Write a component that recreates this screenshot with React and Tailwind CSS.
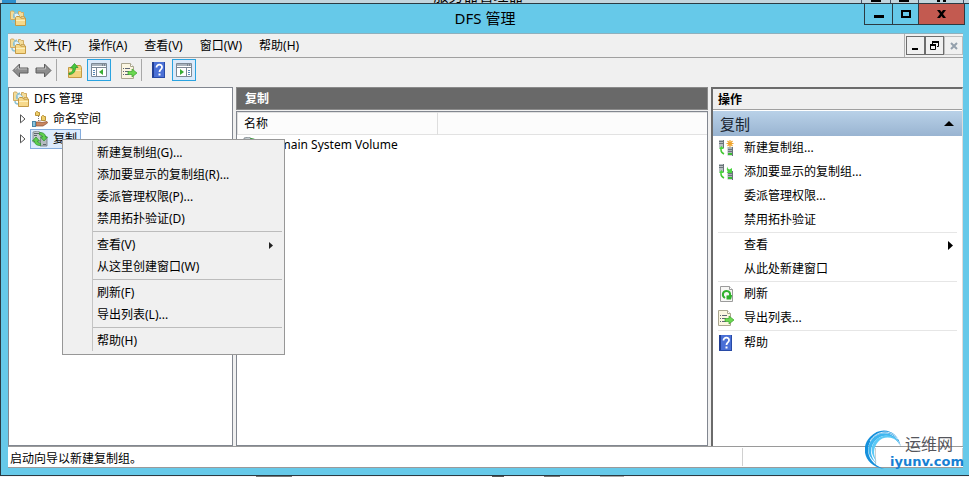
import React from "react";


const CONTEXT_MENU = [
    ["新建复制组(G)...", "添加要显示的复制组(R)...", "委派管理权限(P)...", "禁用拓扑验证(D)"],
    ["查看(V)", "从这里创建窗口(W)"],
    ["刷新(F)", "导出列表(L)..."],
    ["帮助(H)"],
];

const ACTIONS = [
    [
        { label: "新建复制组...", icon: <NewGroupIcon star /> },
        { label: "添加要显示的复制组...", icon: <NewGroupIcon /> },
        { label: "委派管理权限..." },
        { label: "禁用拓扑验证" },
    ],
    [{ label: "查看", submenu: true }, { label: "从此处新建窗口" }],
    [{ label: "刷新", icon: <RefreshIcon /> }, { label: "导出列表...", icon: <ExportIcon /> }],
    [{ label: "帮助", icon: <HelpIcon /> }],
];


export default function App() {
    return (
        <div className="relative flex min-h-screen flex-col overflow-hidden bg-white font-['Noto_Sans','Noto_Sans_CJK_SC',sans-serif] text-xs text-black">
            <BackWindow />
            <div className="flex flex-1 flex-col border-y border-l border-[#2b3a42] bg-[#66c9e9]">
                <TitleBar />
                <div className="ml-[7px] mr-[6px] mb-[7px] flex flex-1 flex-col border-t border-[#8fb0bd] bg-[#f0f0f0]">
                    <MenuBar />
                    <ToolBar />
                    <main className="grid flex-1 grid-cols-[225px_minmax(0,1fr)_252px] gap-[3px]">
                        <Tree />
                        <ReplicationList />
                        <ActionsPane />
                    </main>
                    <StatusBar />
                </div>
            </div>
            <div className="flex h-px gap-[40px] bg-[#f4f4f8] pl-[256px]">
                <span className="w-[36px] bg-[#777]" />
                <span className="w-[120px]" />
                <span className="w-[12px] bg-[#555]" />
                <span className="w-[16px] bg-[#777]" />
                <span className="w-[24px] bg-[#aaa]" />
            </div>
            <Watermark />
        </div>
    );
}


/* sliver of the server manager window behind this one */
function BackWindow() {
    return (
        <div className="relative flex h-[3px] justify-center overflow-hidden bg-[#c3d5dd]" aria-hidden="true">
            <div className="absolute left-[2px] top-0 h-[3px] w-[14px] bg-[#2d8fcc]" />
            <div className="absolute bottom-0 left-1/2 -ml-[51px] text-[15px] leading-4">服务器管理器</div>
            <div className="absolute right-[5px] top-0 flex h-[3px] w-[103px] border-x border-[#444f66]">
                <span className="flex flex-1 justify-center border-r border-[#444f66]"><i className="h-[2px] w-[10px] bg-black" /></span>
                <span className="flex flex-1 justify-center border-r border-[#444f66]"><i className="h-[2px] w-[10px] bg-black" /></span>
                <span className="flex w-[44px] justify-center gap-[3px]"><i className="h-[2px] w-[3px] bg-black" /><i className="h-[2px] w-[3px] bg-black" /></span>
            </div>
        </div>
    );
}


function TitleBar() {
    return (
        <header className="grid h-[29px] grid-cols-[1fr_auto_1fr] items-start pr-[4px]">
            <div className="pl-[9px] pt-[6px]"><FoldersIcon /></div>
            <h1 className="pl-[4px] text-[15px] leading-7">DFS 管理</h1>
            <div className="flex h-[21px] justify-self-end border border-t-0 border-[#2b3a42]">
                <button aria-label="最小化" className="flex w-[28px] items-center justify-center border-r border-[#2b3a42]">
                    <svg width="10" height="10"><path d="M0 6h10v3H0z" /></svg>
                </button>
                <button aria-label="最大化" className="flex w-[26px] items-center justify-center border-r border-[#2b3a42]">
                    <svg width="10" height="8"><path d="M0 0h10v8H0zM2 2v4h6V2z" fillRule="evenodd" /></svg>
                </button>
                <button aria-label="关闭" className="flex w-[45px] items-center justify-center bg-[#c35a50]">
                    <svg width="9" height="8"><path d="M0 0h3l1.500 2L6 0h3L6 4l3 4H6L4.500 6 3 8H0l3-4z" /></svg>
                </button>
            </div>
        </header>
    );
}


function MenuBar() {
    return (
        <div className="flex h-6 border-b border-[#a0a0a0]">
            <nav className="flex flex-1 items-center border-r border-[#b0b0b0] pl-[2px]">
                <FoldersIcon />
                <div className="flex gap-[17px] pl-[8px] leading-4">
                    <button>文件(F)</button>
                    <button>操作(A)</button>
                    <button>查看(V)</button>
                    <button>窗口(W)</button>
                    <button>帮助(H)</button>
                </div>
            </nav>
            <div className="flex items-center pl-px">
                <button aria-label="最小化子窗口" className="flex h-[19px] w-[19px] items-center justify-center border border-[#6d6d6d]">
                    <svg width="9" height="9"><path d="M1 7h6v2H1z" /></svg>
                </button>
                <button aria-label="还原子窗口" className="flex h-[19px] w-[19px] items-center justify-center border border-[#6d6d6d]">
                    <svg width="9" height="9" fill="none" stroke="#000"><path d="M.5 4v4.500h5V4M2.500 3V1.500h6v4H7" /><path d="M0 4h6M2 1h7" strokeWidth="2" /></svg>
                </button>
                <button aria-label="关闭子窗口" className="flex h-[19px] w-[19px] items-center justify-center border border-[#bdbdbd]">
                    <svg width="8" height="8" stroke="#94a0ac" strokeWidth="2"><path d="M1 1l6 6M7 1L1 7" /></svg>
                </button>
            </div>
        </div>
    );
}


function ToolBar() {
    return (
        <div className="flex h-[29px] items-start pl-[4px] pt-px">
            <button aria-label="后退" className="flex h-[22px] w-[23px] items-center"><ArrowIcon /></button>
            <button aria-label="前进" className="flex h-[22px] w-[21px] items-center"><ArrowIcon forward /></button>
            <Divider />
            <button aria-label="上一级" className="flex h-6 w-[30px] items-center justify-end pr-[4px]"><UpFolderIcon /></button>
            <button aria-label="显示/隐藏控制台树" className="flex h-[22px] w-6 items-center justify-center border border-[#2aa3e0] bg-[#dbeafa]"><PaneIcon /></button>
            <button aria-label="导出列表" className="flex h-6 w-[30px] items-center justify-end pr-[4px]"><ExportIcon /></button>
            <Divider />
            <button aria-label="帮助" className="flex h-[22px] w-[30px] items-center justify-center pl-[4px]"><HelpIcon /></button>
            <button aria-label="显示/隐藏操作窗格" className="flex h-[22px] w-6 items-center justify-center border border-[#2aa3e0] bg-[#dbeafa]"><PaneIcon right /></button>
        </div>
    );
}

function Divider() {
    return <div className="h-[22px] w-px bg-[#a8a8a8]" />;
}


function Tree() {
    return (
        <section className="border border-[#828790] bg-white pt-px leading-5">
            <div className="flex items-center gap-[5px] pl-[4px]">
                <FoldersIcon />
                <span>DFS 管理</span>
            </div>
            <ul>
                <li className="flex h-5 items-center pl-[11px]">
                    <Expander label="展开命名空间" />
                    <span className="flex items-center gap-[5px] pl-[6px]"><NamespaceIcon />命名空间</span>
                </li>
                <li className="relative flex h-5 items-center pl-[11px]">
                    <Expander label="展开复制" />
                    <span className="ml-[4px] flex h-5 items-center gap-[5px] border border-[#84acdd] bg-[#dcebfc] pl-px pr-[3px]"><ReplicationIcon />复制</span>
                    <ContextMenu />
                </li>
            </ul>
        </section>
    );
}

function Expander({ label }) {
    return (
        <button aria-label={label} className="flex w-[6px]">
            <svg width="6" height="10" fill="#fff" stroke="#555"><path d="M.5.800v8L5 5z" /></svg>
        </button>
    );
}


function ContextMenu() {
    return (
        <div role="menu" className="absolute left-[53px] top-[10px] z-10 w-[223px] border border-[#979797] bg-[#f0f0f0] pb-[3px] pl-[29px] pr-[2px] pt-px">
            <div className="border-l border-[#c4c4c4]">
                {CONTEXT_MENU.map((group, i) => (
                    <div key={i}>
                        {i > 0 && <div className="flex h-1 items-center"><div className="h-px flex-1 bg-[#bcbcbc]" /></div>}
                        {group.map((label) => (
                            <button key={label} role="menuitem" className="flex h-[22px] w-full items-center justify-between whitespace-nowrap pl-1 pr-[9px] pt-[2px] leading-5">
                                {label}
                                {label === "查看(V)" && <svg width="4" height="7"><path d="M0 0l4 3.500L0 7z" fill="#222" /></svg>}
                            </button>
                        ))}
                    </div>
                ))}
            </div>
        </div>
    );
}


function ReplicationList() {
    return (
        <section className="flex flex-col">
            <h2 className="h-[23px] border border-[#8a8a8a] bg-[#696969] pl-[8px] font-bold leading-[21px] text-white">复制</h2>
            <div className="mt-px flex-1 border border-[#828790] bg-white">
                <table className="w-full table-fixed border-collapse text-left">
                    <thead>
                        <tr className="h-[22px] border-y border-[#e2e2e2] bg-[#fcfcfc]">
                            <th className="w-[200px] border-x border-[#dedede] pl-[6px] font-normal leading-5">名称</th>
                            <th aria-label="空列" />
                        </tr>
                    </thead>
                    <tbody>
                        <tr>
                            <td colSpan={2} className="leading-5">
                                <span className="flex items-center gap-[5px] pl-[5px]"><ReplicationIcon />Domain System Volume</span>
                            </td>
                        </tr>
                    </tbody>
                </table>
            </div>
        </section>
    );
}


function ActionsPane() {
    return (
        <aside className="border-l-2 border-t-2 border-r border-[#6b6b6b] border-r-[#dcdcdc] bg-white">
            <h2 className="h-[21px] border-b border-[#a0a0a0] bg-[#f0f0f0] pl-[5px] pt-px font-bold leading-5">操作</h2>
            <div className="mt-px flex h-[25px] items-center justify-between bg-linear-to-b from-[#b9d1e8] to-[#99b4d1] pl-[7px] pr-[8px]">
                <h3 className="text-[15px] leading-6 text-[#1a2530]">复制</h3>
                <button aria-label="折叠">
                    <svg className="block" width="10" height="5"><path d="M5 0l5 5H0z" /></svg>
                </button>
            </div>
            {ACTIONS.map((group, i) => (
                <div key={i}>
                    {i > 0 && <div className="ml-[5px] mr-[5px] h-px bg-[#e6e6e6]" />}
                    {group.map((item) => (
                        <button key={item.label} className="flex h-6 w-full items-center pl-[5px] pr-[9px] text-left leading-6">
                            <span className="w-[26px]">{item.icon}</span>
                            <span className="flex-1">{item.label}</span>
                            {item.submenu && <svg width="5" height="9"><path d="M0 0l5 4.500L0 9z" /></svg>}
                        </button>
                    ))}
                </div>
            ))}
        </aside>
    );
}


function StatusBar() {
    return (
        <footer className="flex h-[22px] border-y border-[#9a9a9a] bg-white">
            <p className="flex-1 pl-[2px] pt-px leading-[22px]">启动向导以新建复制组。</p>
            <div className="my-px w-[133px] border-l border-[#d0d0d0]" />
            <div className="my-px w-[88px] border-x border-[#d0d0d0]" />
        </footer>
    );
}


function Watermark() {
    return (
        <div className="absolute bottom-[6px] right-[5px] flex h-[42px] w-[99px] flex-col items-end">
            <svg className="absolute left-0 top-0" width="40" height="42" fill="none">
                <path d="M36 19C33 3 17 0 8 9C-1 18 2 34 19 40C-1 37-5 18 5 8C16-4 34 1 36 19z" fill="#1590dc" />
                <path d="M35 17C30 5 17 4 10 12C3 20 6 31 14 36C2 29 0 18 8 9C17 0 32 4 35 17z" fill="#3fb6f0" />
                <path d="M34 14C28 7 18 7 13 13C8 19 8 26 12 33C5 25 5 17 11 11C18 4 29 5 34 14z" fill="#5cc9f5" />
                <path d="M5 12C12 1 26 0 33 10" stroke="#fff" strokeWidth=".8" />
            </svg>
            <div className="pr-[11px] pt-[5px] text-[16px] leading-[20px] text-[#55565c]">运维网</div>
            <div className="font-['DejaVu_Sans',sans-serif] text-[13px] font-bold leading-4 text-[#167fd3]">iyunv.com</div>
        </div>
    );
}


/* ---- icons ---- */

function FoldersIcon() {
    return (
        <svg className="block shrink-0" width="16" height="16">
            <path d="M.5 1.500v8h5v-7H4.500l-1-1.500h-2z" fill="#f3dc9a" stroke="#d0ab62" />
            <path d="M8.500 1.500h2l.8 1h2.200v5h-5z" fill="#f3dc9a" stroke="#d0ab62" />
            <path d="M4 8c-1-3 0-5 3-6M2 10c0 2 1 3 3 3" fill="none" stroke="#8cc3d4" strokeWidth="1.500" />
            <path d="M4 4l3-1 3 3-5 3z" fill="#e2f1f7" stroke="#8fbccb" strokeWidth=".8" />
            <path d="M5.500 7.500l1-1h3l1 1.500h5v7.500h-10z" fill="#f7d98a" stroke="#c49a45" />
            <path d="M6 10.500h9" stroke="#fdf0bd" />
            <path d="M11 6.500h3.500V8H11z" fill="#fdf0bd" stroke="#c49a45" strokeWidth=".8" />
        </svg>
    );
}

function NamespaceIcon() {
    return (
        <svg className="block shrink-0" width="16" height="16">
            <path d="M6.500 5v6M6.500 9.500h3" stroke="#777" strokeDasharray="1 1" />
            <path d="M3.500 1.500l1-1h1l.5 1h1.500v3h-4zM9.500 5.500l1-1h1l.5 1h1.500v4h-4z" fill="#efcf6a" stroke="#b8923a" />
            <path d="M4 11h4l2 .5 5-1 .5 1.500-4.500 3H4z" fill="#c98660" stroke="#8a4f30" strokeWidth=".7" />
            <path d="M0 10h4v6H0z" fill="#4b87a8" />
            <path d="M1 11h2v4H1z" fill="#8cc4dc" />
        </svg>
    );
}

function ReplicationIcon() {
    return (
        <svg className="block shrink-0" width="16" height="16">
            <path d="M1 1l5-1 3 2v9H1z" fill="#c3cacd" stroke="#7b858a" strokeWidth=".8" />
            <path d="M9 6l4-1 2 1v9H8z" fill="#b4bcc0" stroke="#6d777c" strokeWidth=".8" />
            <path d="M2 2.500h5M2 4.500h3M11 13.500h3" stroke="#5d676c" />
            <path d="M7.500 1.500c4 0 6 1.500 6 4.500h2L12 10 8.500 6h2c0-1.500-1-2-3-2z" fill="#5fd04f" stroke="#258d2a" strokeWidth=".7" />
            <path d="M8.500 14.500c-4 0-6-1.500-6-4.500h-2L4 6l3.500 4h-2c0 1.500 1 2 3 2z" fill="#5fd04f" stroke="#258d2a" strokeWidth=".7" />
        </svg>
    );
}

function NewGroupIcon({ star }) {
    return (
        <svg className="block" width="16" height="16">
            <path d="M1 0h5v8H1z" fill="#b9bfc3" />
            <path d="M1 1.500h4M1 3.500h4M5.500 0v8" stroke="#6b757a" />
            <path d="M9.500 7h5v8.500h-5z" fill="#aab2b6" />
            <path d="M10 9.500h4M10 11.500h4M14.500 7v9" stroke="#69737a" />
            <path d="M3 8v2c0 2 1 3 3 4" fill="none" stroke="#45c735" strokeWidth="1.500" />
            <path d="M1 9l2.500-3L6 9z" fill="#45d83a" />
            <path d="M10 14h4" stroke="#38bd32" strokeWidth="2" />
            {star ? (
                <path d="M12 0v7M8.500 3.500h7M9.500 1l5 5M14.500 1l-5 5" stroke="#efa42d" strokeWidth="1.200" />
            ) : (
                <path d="M9.500 2.500c0 2 .5 2.500 2 3l2.500-1.500v5H8.500l1.500-1.500c-1.500-1-1.500-3-.5-5z" fill="#4bd441" />
            )}
        </svg>
    );
}

function ArrowIcon({ forward }) {
    return (
        <svg className="block" width="17" height="15">
            <path
                d={forward ? "M16 7.500L9.500 1v4H1v5h8.500v4z" : "M1 7.500L7.500 1v4H16v5H7.500v4z"}
                fill="#8d8d8d"
                stroke="#5e5e5e"
            />
            <path d={forward ? "M2 6h8.500V3.500" : "M3 6.500L6.500 3.500V6H15"} fill="none" stroke="#bdbdbd" />
        </svg>
    );
}

function UpFolderIcon() {
    return (
        <svg className="block" width="16" height="16">
            <path d="M1.500 4.500h7l1-2h4l1 2v10h-13z" fill="#f2d37c" stroke="#c49a45" />
            <path d="M2 7.500h12" stroke="#fbeab5" />
            <path d="M2 10c3 0 4-2 4-5H3.500L7.500.5l3.500 4H8.500c0 5-3 7-6.500 7z" fill="#48c93d" stroke="#24902a" strokeWidth=".7" />
        </svg>
    );
}

function PaneIcon({ right }) {
    return (
        <svg className="block" width="16" height="14">
            <path d="M.5.5h15v13H.5z" fill="#fff" stroke="#7c8894" />
            <path d="M1 2h14" stroke="#aab4bd" strokeWidth="2" />
            <path d="M11 2h1M13 2h1" stroke="#4d5964" />
            <path d="M0 4.500h16" stroke="#7c8894" />
            {right ? (
                <>
                    <path d="M10.500 5v8" stroke="#7c8894" />
                    <path d="M12 7.500h2M12 9.500h2M12 11.500h2" stroke="#5689b8" />
                    <path d="M4 6l4 3-4 3z" fill="#39ad35" />
                </>
            ) : (
                <>
                    <path d="M5.500 5v8" stroke="#7c8894" />
                    <path d="M2 7.500h2M2 9.500h2M2 11.500h2" stroke="#5689b8" />
                    <path d="M12 6L8 9l4 3z" fill="#39ad35" />
                </>
            )}
        </svg>
    );
}

function ExportIcon() {
    return (
        <svg className="block" width="16" height="16">
            <path d="M.5.5h9l3 3v12H.5z" fill="#fbf6e1" stroke="#aaa68f" />
            <path d="M9.500.5v3h3" fill="#fff" stroke="#aaa68f" />
            <path d="M2 5.500h1M2 8.500h1M2 11.500h1M4 5.500h5M4 8.500h4M4 11.500h4" stroke="#5f6675" />
            <path d="M7 8.500h4V6l5 4-5 4v-2.500H7z" fill="#6bd850" stroke="#3aa32d" strokeWidth=".7" />
        </svg>
    );
}

function RefreshIcon() {
    return (
        <svg className="block" width="16" height="16">
            <path d="M2.500.5h9l3 3v12h-12z" fill="#f7f7f5" stroke="#9b9b9b" />
            <path d="M11.500.5v3h3" fill="#fff" stroke="#9b9b9b" />
            <path d="M7 12C3.500 10 4.500 5 8.500 5c3 0 4 2 3.500 5" fill="none" stroke="#2fb12c" strokeWidth="2" />
            <path d="M8.500 9.500L14 9v1l-1 3.500H8.500z" fill="#2fb12c" />
        </svg>
    );
}

function HelpIcon() {
    return (
        <svg className="block" width="16" height="16">
            <path d="M1 0h13v16H1z" fill="#4a70d6" />
            <path d="M1 0h2v16H1z" fill="#223f94" />
            <path d="M13 0h1v16H1v-1h12z" fill="#284aa6" />
            <path d="M5.500 5.500C5.500 1.500 11.500 2 11 5.500C10.800 7.500 8.500 7.500 8.500 10" fill="none" stroke="#fff" strokeWidth="1.800" />
            <path d="M7.500 11.500h2v2h-2z" fill="#fff" />
        </svg>
    );
}
